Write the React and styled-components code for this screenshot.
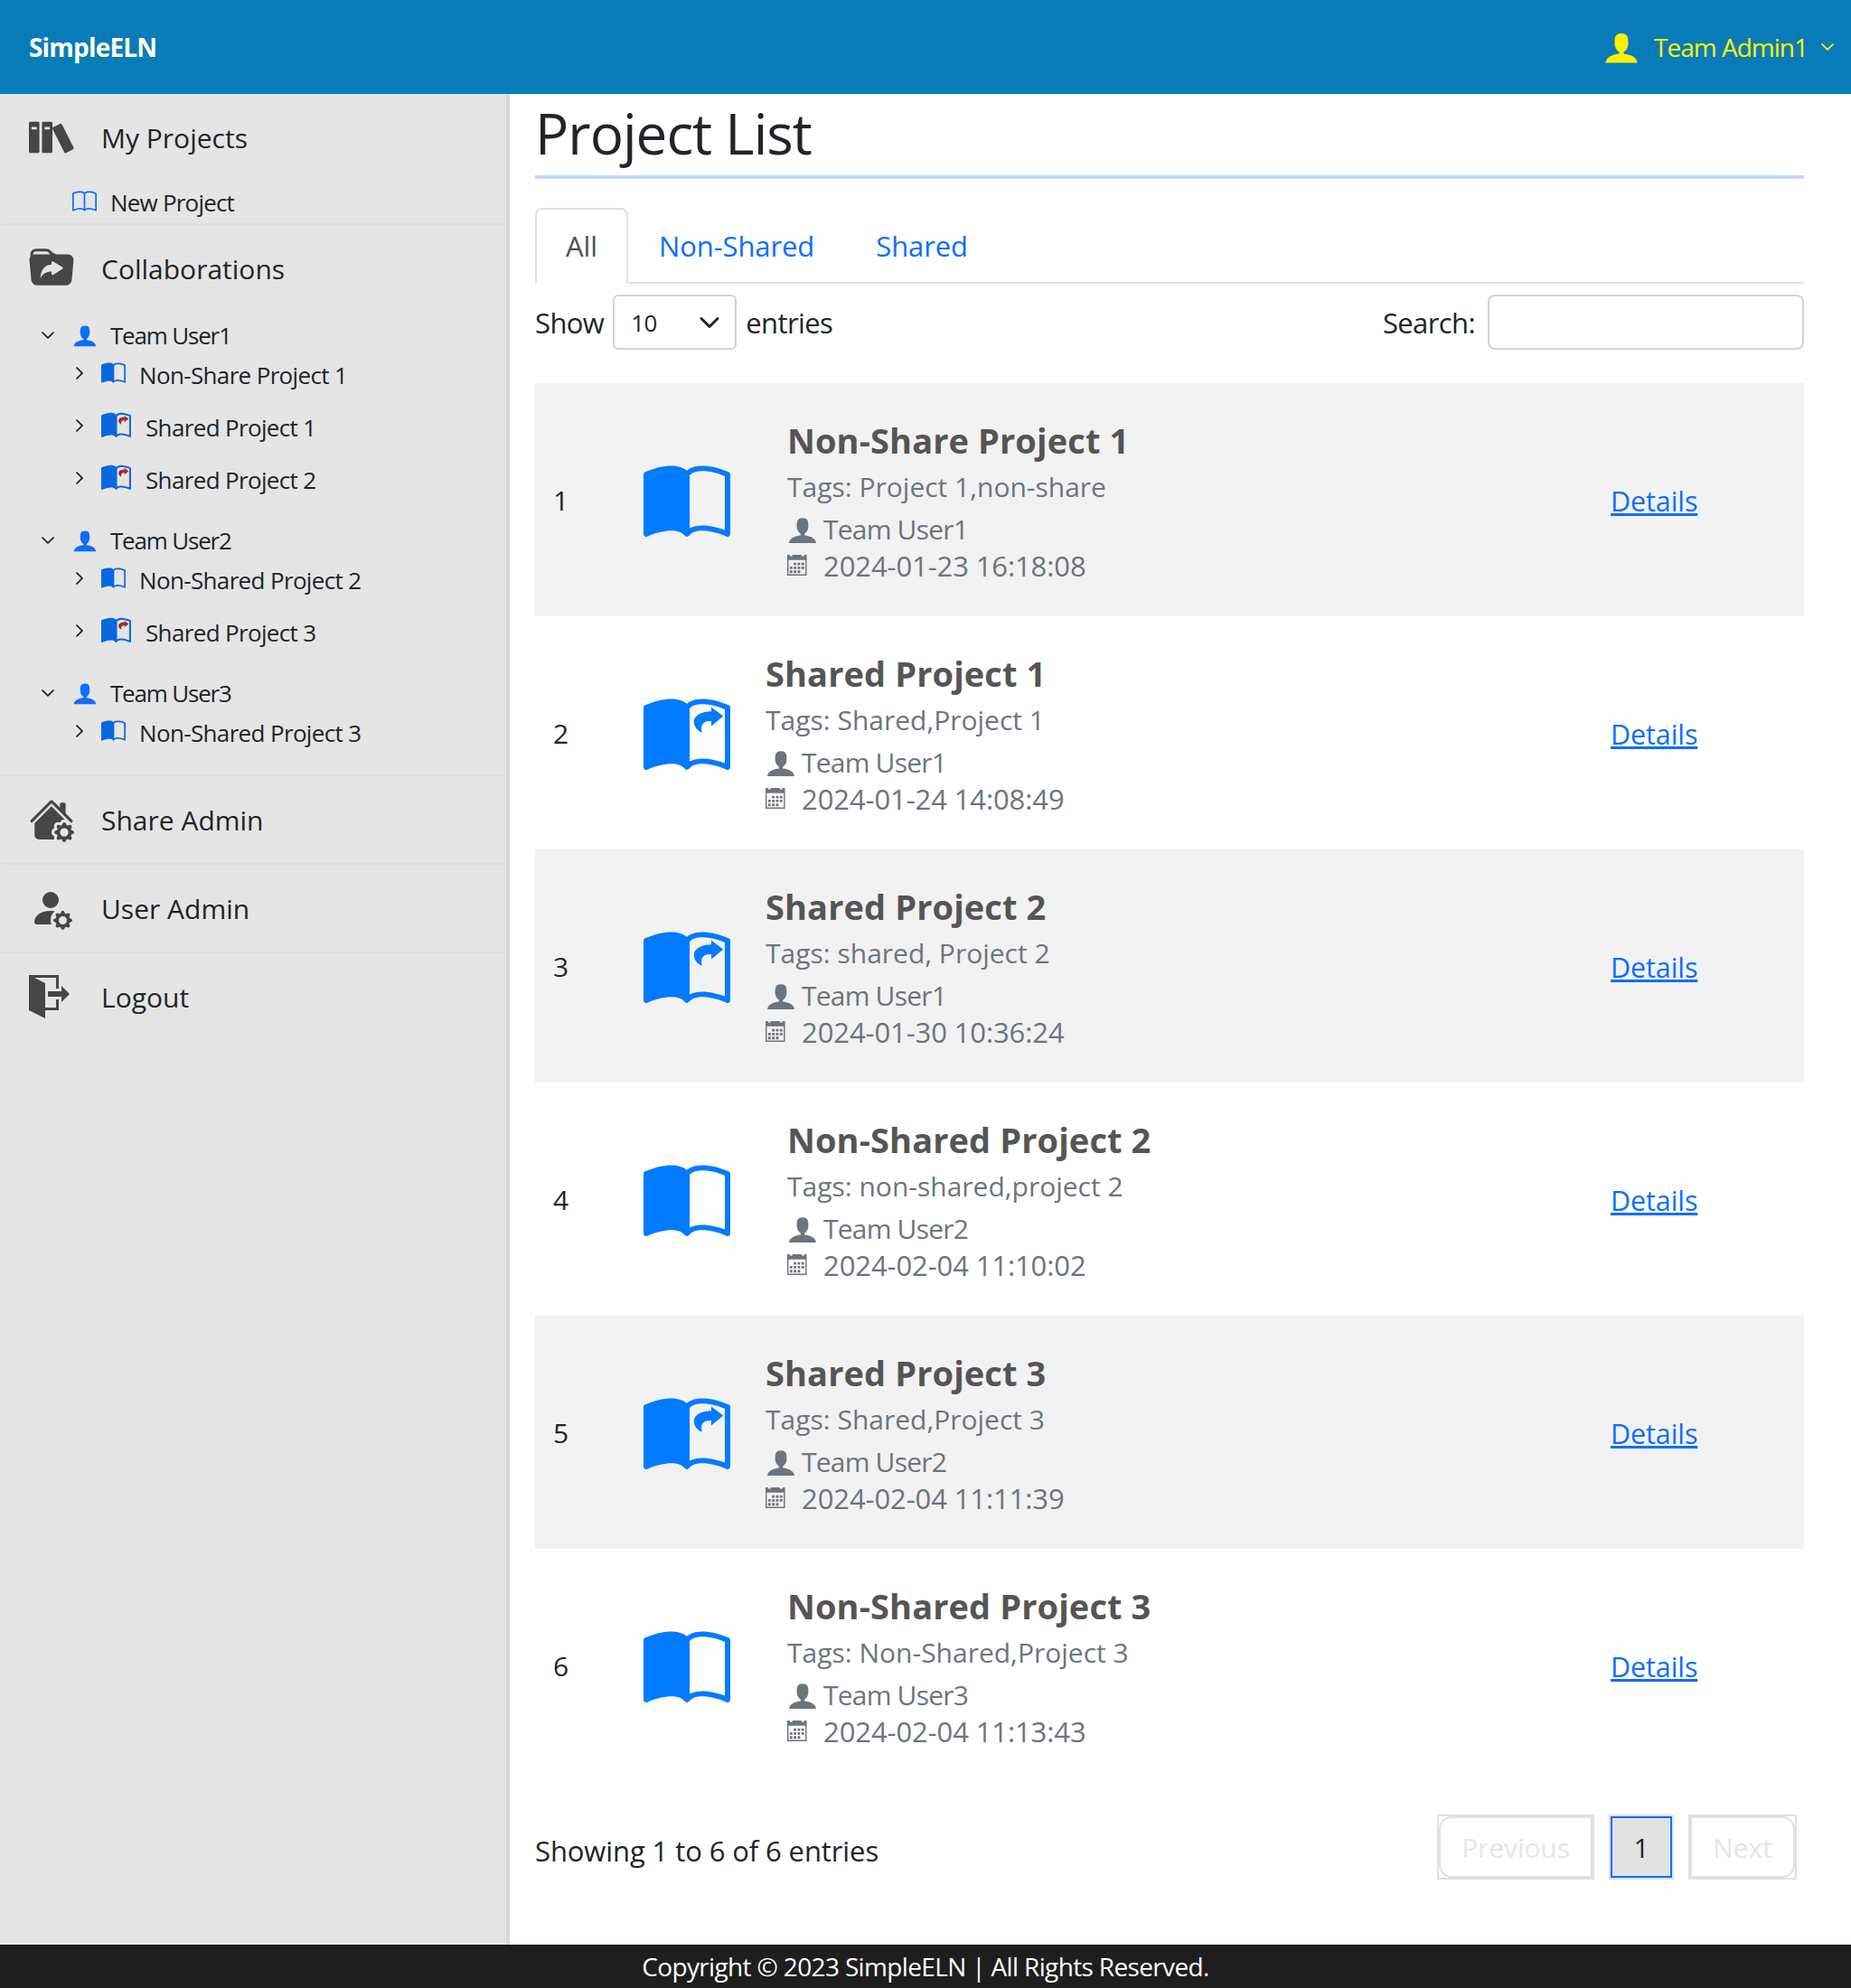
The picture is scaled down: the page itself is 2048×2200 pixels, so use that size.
import React from "react";
import styled, { createGlobalStyle } from "styled-components";
import {
  BsBook,
  BsBookHalf,
  BsChevronDown,
  BsChevronRight,
  BsFillFolderSymlinkFill,
  BsHouseGearFill,
  BsPersonFillGear,
} from "react-icons/bs";
import { ImBooks, ImCalendar, ImExit, ImUser } from "react-icons/im";

const GlobalStyle = createGlobalStyle`
  * { box-sizing: border-box; }
  body {
    margin: 0;
    background: #fff;
    color: #212529;
    font-family: "Open Sans", "Noto Sans", sans-serif;
    font-size: 28px;
    letter-spacing: -0.8px;
  }
`;

const Page = styled.div`
  width: 2048px;
  height: 2200px;
  display: flex;
  flex-direction: column;
  overflow: hidden;
`;

const Header = styled.header`
  height: 104px;
  flex: none;
  background: #087cb9;
  display: flex;
  align-items: center;
  justify-content: space-between;
  padding: 0 18px 0 32px;
`;

const Brand = styled.div`
  color: #fff;
  font-size: 28px;
  font-weight: 700;
`;

const UserMenu = styled.div`
  display: flex;
  align-items: center;
  color: #fff200;
  font-size: 28px;
  letter-spacing: -1px;
  svg:first-child {
    font-size: 40px;
    margin-right: 16px;
  }
  svg:last-child {
    font-size: 16px;
    margin-left: 14px;
    stroke: currentColor;
    stroke-width: 1px;
  }
`;

const Body = styled.div`
  flex: 1;
  display: flex;
  min-height: 0;
`;

const Sidebar = styled.aside`
  width: 564px;
  flex: none;
  background: #e5e5e5;
  border-right: 4px solid #d8d8d8;
`;

const MenuItem = styled.div`
  height: 96px;
  display: flex;
  align-items: center;
  padding-left: 32px;
  font-size: 30px;
  letter-spacing: 0;
  color: #212529;
`;

const MenuIcon = styled.span`
  width: 80px;
  flex: none;
  display: flex;
  align-items: center;
  color: #464646;
  font-size: ${(p) => p.$size || 50}px;
`;

const Divider = styled.div`
  height: 2px;
  margin-left: 2px;
  background: #dedede;
`;

const NewProject = styled.div`
  height: 47px;
  display: flex;
  align-items: center;
  padding-left: 80px;
  font-size: 26px;
  svg {
    color: #0d6efd;
    font-size: 27px;
    margin-right: 15px;
  }
`;

const Tree = styled.div`
  padding: 4px 0 24px;
`;

const TreeGroup = styled.div`
  margin-bottom: 23px;
  &:last-child {
    margin-bottom: 0;
  }
`;

const TreeUser = styled.div`
  height: 44px;
  display: flex;
  align-items: center;
  padding-left: 45px;
  font-size: 26px;
  letter-spacing: -1.2px;
  svg:first-child {
    font-size: 16px;
    stroke: currentColor;
    stroke-width: 1px;
    margin-right: 19px;
  }
  svg:nth-child(2) {
    color: #0d6efd;
    font-size: 28px;
    margin-right: 14px;
  }
`;

const TreeProject = styled.div`
  height: 44px;
  margin-bottom: ${(p) => (p.$last ? 0 : 14)}px;
  display: flex;
  align-items: center;
  padding-left: 80px;
  font-size: 26px;
  letter-spacing: -0.65px;
  > svg:first-child {
    font-size: 16px;
    stroke: currentColor;
    stroke-width: 1px;
    margin: -4px 16px 0 0;
  }
`;

const TreeBook = styled.span`
  display: flex;
  margin: -4px ${(p) => (p.$shared ? 16 : 15)}px 0 0;
  color: #0868de;
  font-size: ${(p) => (p.$shared ? 33 : 27)}px;
`;

const Main = styled.main`
  flex: 1;
  padding: 0 52px 0 28px;
  display: flex;
  flex-direction: column;
`;

const Title = styled.h1`
  margin: 0 0 32px;
  height: 94px;
  border-bottom: 4px solid #bfdafc;
  font-size: 62px;
  font-weight: 400;
  line-height: 86px;
  letter-spacing: -1px;
`;

const Tabs = styled.nav`
  height: 84px;
  flex: none;
  display: flex;
  border-bottom: 2px solid #dee2e6;
`;

const Tab = styled.div`
  height: 84px;
  padding: 0 32px;
  display: flex;
  align-items: center;
  font-size: 31px;
  letter-spacing: -0.1px;
  color: ${(p) => (p.$active ? "#495057" : "#0d6efd")};
  background: ${(p) => (p.$active ? "#fff" : "transparent")};
  border: 2px solid ${(p) => (p.$active ? "#dee2e6" : "transparent")};
  border-bottom-color: ${(p) => (p.$active ? "#fff" : "transparent")};
  border-radius: 8px 8px 0 0;
`;

const Controls = styled.div`
  height: 61px;
  margin: 12px 0 37px;
  display: flex;
  align-items: center;
  justify-content: space-between;
  font-size: 31px;
  letter-spacing: -0.6px;
`;

const ControlGroup = styled.label`
  display: flex;
  align-items: center;
`;

const SelectBox = styled.div`
  width: 137px;
  height: 61px;
  margin: 0 10px;
  padding: 0 16px 0 18px;
  display: flex;
  align-items: center;
  justify-content: space-between;
  border: 2px solid #ced4da;
  border-radius: 6px;
  font-size: 26px;
  svg {
    font-size: 24px;
    stroke: currentColor;
    stroke-width: 1px;
  }
`;

const SearchInput = styled.input`
  width: 350px;
  height: 61px;
  margin-left: 14px;
  border: 2px solid #ced4da;
  border-radius: 8px;
  background: #fff;
`;

const Row = styled.div`
  height: 258px;
  flex: none;
  display: flex;
  align-items: center;
  background: ${(p) => (p.$odd ? "#f2f2f2" : "#fff")};
`;

const RowNumber = styled.div`
  width: 118px;
  padding-left: 20px;
  font-size: 30px;
`;

const RowIcon = styled.div`
  width: ${(p) => (p.$shared ? 137 : 161)}px;
  flex: none;
  display: flex;
  padding: 10px 0 0 2px;
  color: #007bff;
  font-size: 96px;
`;

const RowText = styled.div`
  flex: 1;
  min-width: 0;
  padding-top: 2px;
`;

const RowTitle = styled.h4`
  margin: 0;
  height: 52px;
  line-height: 48px;
  font-size: 38px;
  font-weight: 700;
  letter-spacing: 0.1px;
  color: #555;
`;

const RowTags = styled.div`
  height: 51px;
  line-height: 47px;
  font-size: 30px;
  letter-spacing: 0;
  color: #6c757d;
`;

const RowMeta = styled.div`
  height: 40px;
  display: flex;
  align-items: center;
  font-size: ${(p) => p.$text || 30}px;
  letter-spacing: ${(p) => p.$spacing || "-0.8px"};
  color: #6c757d;
`;

const MetaIcon = styled.span`
  width: 40px;
  flex: none;
  display: flex;
  font-size: ${(p) => p.$size}px;
`;

const DetailsLink = styled.a`
  width: 214px;
  flex: none;
  padding-top: 2px;
  font-size: 30.5px;
  letter-spacing: -0.1px;
  color: #0d6efd;
  text-decoration: underline;
`;

const TableFoot = styled.div`
  flex: 1;
  display: flex;
  align-items: center;
  justify-content: space-between;
  padding: 0 8px 36px 0;
  font-size: 31px;
  letter-spacing: -0.1px;
`;

const FootInfo = styled.div`
  padding-top: 8px;
`;

const Pager = styled.div`
  display: flex;
  gap: 16px;
`;

const PageItem = styled.div`
  width: ${(p) => p.$width}px;
  height: 72px;
  border: 2px solid #dee2e6;
`;

const PageLink = styled.div`
  height: 100%;
  display: flex;
  align-items: center;
  justify-content: center;
  font-size: 30px;
  color: ${(p) => (p.$current ? "#212529" : "#e6e6e6")};
  background: ${(p) => (p.$current ? "#e2e2e2" : "#fff")};
  border: 2px solid ${(p) => (p.$current ? "#0d6efd" : "#dee2e6")};
  border-radius: ${(p) => p.$radius || "0"};
`;

const Footer = styled.footer`
  height: 48px;
  flex: none;
  background: #1e1e1e;
  color: #fff;
  font-size: 28px;
  letter-spacing: -0.65px;
  text-align: center;
  line-height: 48px;
`;

const BOOK_HALF =
  "M8.5 2.687c.654-.689 1.782-.886 3.112-.752 1.234.124 2.503.523 3.388.893v9.923c-.918-.35-2.107-.692-3.287-.81-1.094-.111-2.278-.039-3.213.492zM8 1.783C7.015.936 5.587.81 4.287.94c-1.514.153-3.042.672-3.994 1.105A.5.5 0 0 0 0 2.5v11a.5.5 0 0 0 .707.455c.882-.4 2.303-.881 3.68-1.02 1.409-.142 2.59.087 3.223.877a.5.5 0 0 0 .78 0c.633-.79 1.814-1.019 3.222-.877 1.378.139 2.8.62 3.681 1.02A.5.5 0 0 0 16 13.5v-11a.5.5 0 0 0-.293-.455c-.952-.433-2.48-.952-3.994-1.105C10.413.809 8.985.936 8 1.783";

function SharedBook({ arrow }) {
  return (
    <svg width="1em" height="1em" viewBox="0 0 16 16" fill="currentColor">
      <path d={BOOK_HALF} />
      <path
        fill={arrow}
        d="M12.5 2.4 14.7 4.1 12.5 5.9V5C11.5 4.9 10.3 5.3 10.8 7.1 9.8 6.8 9.3 5.9 9.3 5.1 9.3 3.9 10.8 3.2 12.5 3.2Z"
      />
    </svg>
  );
}

const team = [
  {
    name: "Team User1",
    projects: [
      { name: "Non-Share Project 1" },
      { name: "Shared Project 1", shared: true },
      { name: "Shared Project 2", shared: true },
    ],
  },
  {
    name: "Team User2",
    projects: [
      { name: "Non-Shared Project 2" },
      { name: "Shared Project 3", shared: true },
    ],
  },
  { name: "Team User3", projects: [{ name: "Non-Shared Project 3" }] },
];

const rows = [
  { title: "Non-Share Project 1", tags: "Project 1,non-share", user: "Team User1", date: "2024-01-23 16:18:08" },
  { title: "Shared Project 1", tags: "Shared,Project 1", user: "Team User1", date: "2024-01-24 14:08:49", shared: true },
  { title: "Shared Project 2", tags: "shared, Project 2", user: "Team User1", date: "2024-01-30 10:36:24", shared: true },
  { title: "Non-Shared Project 2", tags: "non-shared,project 2", user: "Team User2", date: "2024-02-04 11:10:02" },
  { title: "Shared Project 3", tags: "Shared,Project 3", user: "Team User2", date: "2024-02-04 11:11:39", shared: true },
  { title: "Non-Shared Project 3", tags: "Non-Shared,Project 3", user: "Team User3", date: "2024-02-04 11:13:43" },
];

export default function App() {
  return (
    <Page>
      <GlobalStyle />
      <Header>
        <Brand>SimpleELN</Brand>
        <UserMenu>
          <ImUser />
          Team Admin1
          <BsChevronDown />
        </UserMenu>
      </Header>
      <Body>
        <Sidebar>
          <MenuItem>
            <MenuIcon $size={52}><ImBooks /></MenuIcon>
            My Projects
          </MenuItem>
          <NewProject>
            <BsBook />
            New Project
          </NewProject>
          <Divider />
          <MenuItem>
            <MenuIcon $size={50}><BsFillFolderSymlinkFill /></MenuIcon>
            Collaborations
          </MenuItem>
          <Tree>
            {team.map((member) => (
              <TreeGroup key={member.name}>
                <TreeUser>
                  <BsChevronDown />
                  <ImUser />
                  {member.name}
                </TreeUser>
                {member.projects.map((project, i) => (
                  <TreeProject key={project.name} $last={i === member.projects.length - 1}>
                    <BsChevronRight />
                    <TreeBook $shared={project.shared}>
                      {project.shared ? <SharedBook arrow="#a52a2a" /> : <BsBookHalf />}
                    </TreeBook>
                    {project.name}
                  </TreeProject>
                ))}
              </TreeGroup>
            ))}
          </Tree>
          <Divider />
          <MenuItem>
            <MenuIcon $size={50}><BsHouseGearFill /></MenuIcon>
            Share Admin
          </MenuItem>
          <Divider />
          <MenuItem>
            <MenuIcon $size={48}><BsPersonFillGear /></MenuIcon>
            User Admin
          </MenuItem>
          <Divider />
          <MenuItem>
            <MenuIcon $size={48}><ImExit /></MenuIcon>
            Logout
          </MenuItem>
        </Sidebar>
        <Main>
          <Title>Project List</Title>
          <Tabs>
            <Tab $active>All</Tab>
            <Tab>Non-Shared</Tab>
            <Tab>Shared</Tab>
          </Tabs>
          <Controls>
            <ControlGroup>
              Show
              <SelectBox>
                10
                <BsChevronDown />
              </SelectBox>
              entries
            </ControlGroup>
            <ControlGroup>
              Search:
              <SearchInput type="search" />
            </ControlGroup>
          </Controls>
          {rows.map((row, i) => (
            <Row key={row.title} $odd={i % 2 === 0}>
              <RowNumber>{i + 1}</RowNumber>
              <RowIcon $shared={row.shared}>
                {row.shared ? <SharedBook arrow="currentColor" /> : <BsBookHalf />}
              </RowIcon>
              <RowText>
                <RowTitle>{row.title}</RowTitle>
                <RowTags>Tags: {row.tags}</RowTags>
                <RowMeta>
                  <MetaIcon $size={34}><ImUser /></MetaIcon>
                  {row.user}
                </RowMeta>
                <RowMeta $text={31} $spacing="-0.1px">
                  <MetaIcon $size={23}><ImCalendar /></MetaIcon>
                  {row.date}
                </RowMeta>
              </RowText>
              <DetailsLink href="#">Details</DetailsLink>
            </Row>
          ))}
          <TableFoot>
            <FootInfo>Showing 1 to 6 of 6 entries</FootInfo>
            <Pager>
              <PageItem $width={174}>
                <PageLink $radius="14px 0 0 14px">Previous</PageLink>
              </PageItem>
              <PageItem $width={72}>
                <PageLink $current>1</PageLink>
              </PageItem>
              <PageItem $width={120}>
                <PageLink $radius="0 14px 14px 0">Next</PageLink>
              </PageItem>
            </Pager>
          </TableFoot>
        </Main>
      </Body>
      <Footer>Copyright © 2023 SimpleELN | All Rights Reserved.</Footer>
    </Page>
  );
}
